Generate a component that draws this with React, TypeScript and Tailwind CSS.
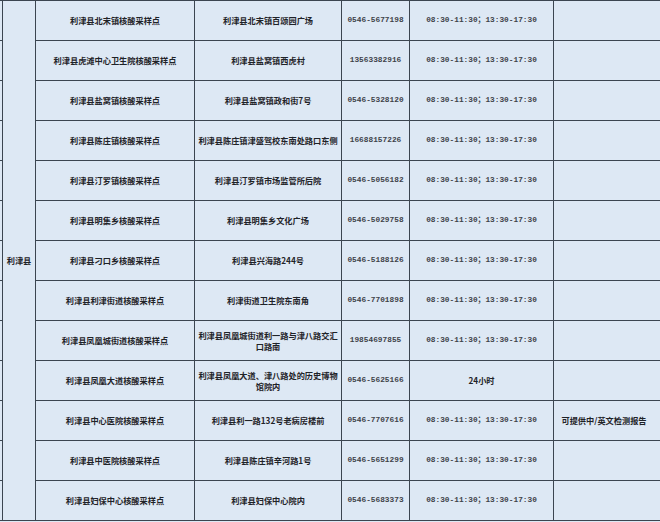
const rows = [
  { name: '利津县北宋镇核酸采样点', addr: ['利津县北宋镇百颂园广场'], phone: '0546-5677198' },
  { name: '利津县虎滩中心卫生院核酸采样点', addr: ['利津县盐窝镇西虎村'], phone: '13563382916' },
  { name: '利津县盐窝镇核酸采样点', addr: ['利津县盐窝镇政和街7号'], phone: '0546-5328120' },
  { name: '利津县陈庄镇核酸采样点', addr: ['利津县陈庄镇津盛驾校东南处路口东侧'], phone: '16688157226' },
  { name: '利津县汀罗镇核酸采样点', addr: ['利津县汀罗镇市场监管所后院'], phone: '0546-5056182' },
  { name: '利津县明集乡核酸采样点', addr: ['利津县明集乡文化广场'], phone: '0546-5029758' },
  { name: '利津县刁口乡核酸采样点', addr: ['利津县兴海路244号'], phone: '0546-5188126' },
  { name: '利津县利津街道核酸采样点', addr: ['利津街道卫生院东南角'], phone: '0546-7701898' },
  { name: '利津县凤凰城街道核酸采样点', addr: ['利津县凤凰城街道利一路与津八路交汇', '口路南'], phone: '19854697855' },
  { name: '利津县凤凰大道核酸采样点', addr: ['利津县凤凰大道、津八路处的历史博物', '馆院内'], phone: '0546-5625166', time: '24小时' },
  { name: '利津县中心医院核酸采样点', addr: ['利津县利一路132号老病房楼前'], phone: '0546-7707616', note: '可提供中/英文检测报告' },
  { name: '利津县中医院核酸采样点', addr: ['利津县陈庄镇辛河路1号'], phone: '0546-5651299' },
  { name: '利津县妇保中心核酸采样点', addr: ['利津县妇保中心院内'], phone: '0546-5683373' },
];

const cjk = "font-['Noto_Sans_CJK_SC',sans-serif] font-bold text-[8.2px] text-[#1f2328] whitespace-nowrap";
const mono = "font-['Liberation_Mono','Noto_Sans_CJK_SC',monospace] font-bold text-[7.8px] text-[#3d4249] whitespace-nowrap";
const cell = 'bg-[#dde8f4] flex flex-col items-center justify-center text-center leading-[11px]';

export default function App() {
  return (
    <div className="w-[660px] h-[522px] bg-[#dde8f4] overflow-hidden">
      <div className="flex gap-px bg-[#3b4550] py-px">
        {/* cut-off column on the far left */}
        <div className="w-[2px] flex flex-col gap-px">
          {rows.map((_, i) => (
            <div key={i} className="h-[39px] bg-[#dde8f4]" />
          ))}
        </div>
        <div className={`${cell} ${cjk} w-[32px]`}>利津县</div>
        <div className="grid grid-cols-[158px_146px_67px_143px_106px] auto-rows-[39px] gap-px">
          {rows.map((r, i) => (
            <div key={i} className="contents">
              <div className={`${cell} ${cjk}`}>{r.name}</div>
              <div className={`${cell} ${cjk}`}>
                {r.addr.map((line) => (
                  <span key={line}>{line}</span>
                ))}
              </div>
              <div className={`${cell} ${mono}`}>{r.phone}</div>
              <div className={`${cell} ${r.time ? cjk : mono}`}>{r.time ?? '08:30-11:30；13:30-17:30'}</div>
              <div className={`${cell} ${cjk} pr-[6px]`}>{r.note ?? ''}</div>
            </div>
          ))}
        </div>
      </div>
    </div>
  );
}
